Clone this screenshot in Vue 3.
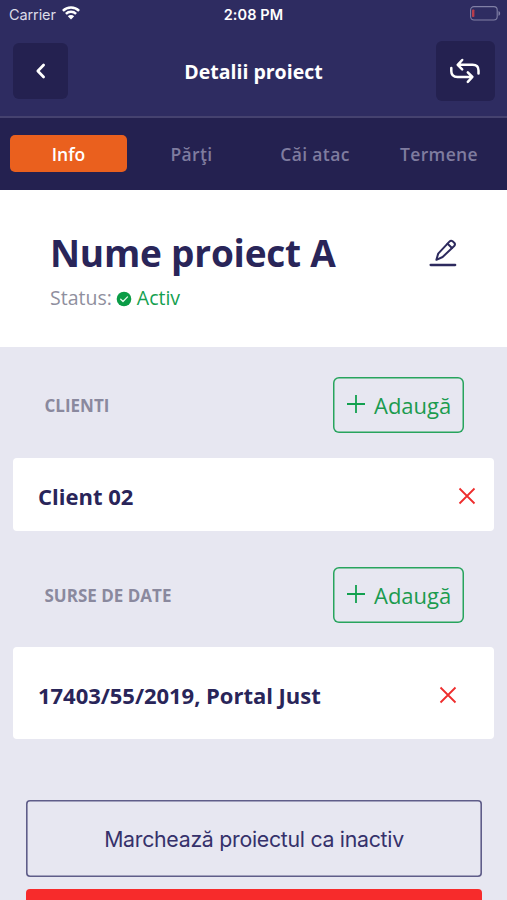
<script setup>
import { ref } from 'vue'

const tabs = ['Info', 'Părţi', 'Căi atac', 'Termene']
const activeTab = ref('Info')
const sections = [
  { key: 'clients', title: 'CLIENTI', items: ['Client 02'] },
  { key: 'sources', title: 'SURSE DE DATE', items: ['17403/55/2019, Portal Just'] },
]
</script>

<template>
  <div class="screen">
    <div class="status-bar">
      <div class="carrier">
        <span class="carrier-name">Carrier</span>
        <svg class="wifi" viewBox="0 0 18 14" width="18" height="14">
          <path d="M0.9 4.8a11.6 11.6 0 0 1 16.2 0M3.9 7.9a7.3 7.3 0 0 1 10.2 0" fill="none" stroke="#fff" stroke-width="2.5" />
          <path d="M9 13.5 5.8 10.3a4.6 4.6 0 0 1 6.4 0z" fill="#fff" />
        </svg>
      </div>
      <span class="time">2:08 PM</span>
      <svg class="battery" viewBox="0 0 31 15" width="31" height="15">
        <rect x="0.6" y="0.6" width="26.6" height="13.4" rx="3.4" fill="none" stroke="#8180a6" stroke-width="1.1" />
        <rect x="2" y="3.4" width="2.4" height="7.6" rx="0.8" fill="#b93d4b" />
        <path d="M28.5 5v4.8c2.2-.8 2.2-4 0-4.8z" fill="#8180a6" />
      </svg>
    </div>

    <header class="header">
      <button class="back" aria-label="Înapoi">
        <svg viewBox="0 0 12 16" width="12" height="16">
          <path d="M8.6 2 2.8 8 8.6 14" fill="none" stroke="#fff" stroke-width="2.7" stroke-linecap="round" stroke-linejoin="round" />
        </svg>
      </button>
      <h1 class="title"><span>Detalii proiect</span></h1>
      <button class="sync" aria-label="Sincronizare">
        <svg viewBox="0 0 32 26" width="32" height="26">
          <g fill="none" stroke="#fff" stroke-width="2.5" stroke-linecap="round" stroke-linejoin="round">
            <path d="M13.2 2 8.7 6.8 13.2 11.4M9 6.8H23.5Q29.5 6.8 29.5 12.5V15.5" />
            <path d="M18.8 14.4 23.4 19 18.8 23.8M23 19H8.5Q2.3 19 2.3 13V10" />
          </g>
        </svg>
      </button>
    </header>

    <nav class="tabs">
      <button
        v-for="tab in tabs"
        :key="tab"
        class="tab"
        :class="{ active: tab === activeTab }"
        @click="activeTab = tab"
      >{{ tab }}</button>
    </nav>

    <section class="project">
      <div>
        <h2 class="name"><span>Nume proiect A</span></h2>
        <p class="status">
          <span class="status-label">Status:</span>
          <svg viewBox="0 0 16 16" width="16" height="16">
            <circle cx="8" cy="8" r="7.3" fill="#0a9c46" />
            <path d="M4.7 8.2 7 10.5 11.5 5.9" fill="none" stroke="#e8faee" stroke-width="1.3" stroke-linecap="round" stroke-linejoin="round" />
          </svg>
          <span class="status-value">Activ</span>
        </p>
      </div>
      <svg class="edit" viewBox="0 0 28 30" width="28" height="30">
        <g fill="none" stroke="#2d2a5e" stroke-width="2" stroke-linejoin="round" stroke-linecap="round">
          <path d="M7.4 21.8 9.2 15.6 20.4 3.6Q22 2 23.6 3.3L25.2 4.7Q26.7 6.2 25.2 8L13.6 19Z" />
          <path d="M18.6 5.8 23 10" />
        </g>
        <path d="M1.6 27H26.2" stroke="#2d2a5e" stroke-width="2.3" stroke-linecap="round" />
      </svg>
    </section>

    <section v-for="section in sections" :key="section.key" class="group" :class="section.key">
      <div class="group-head">
        <h3>{{ section.title }}</h3>
        <button class="add">
          <svg viewBox="0 0 20 20" width="20" height="20">
            <path d="M10 1V19M1 10H19" stroke="#13a04f" stroke-width="1.8" />
          </svg>
          <span>Adaugă</span>
        </button>
      </div>
      <div v-for="item in section.items" :key="item" class="card">
        <span class="card-label">{{ item }}</span>
        <svg viewBox="0 0 18 18" width="18" height="18">
          <path d="M1.5 1.5 16.5 16.5M16.5 1.5 1.5 16.5" stroke="#ee2d2d" stroke-width="1.8" />
        </svg>
      </div>
    </section>

    <div class="actions">
      <button class="inactive"><span>Marchează proiectul ca inactiv</span></button>
      <button class="danger" aria-label="Șterge"></button>
    </div>
  </div>
</template>

<style>
body {
  margin: 0;
  overflow: hidden;
}
</style>

<style scoped>
.screen {
  box-sizing: border-box;
  width: 507px;
  height: 900px;
  overflow: hidden;
  display: flex;
  flex-direction: column;
  background: #e7e7f1;
  color: #292559;
  font-family: "Open Sans", "Noto Sans", sans-serif;
}
.screen * {
  box-sizing: border-box;
}
button {
  padding: 0;
  border: 0;
  background: none;
  font-family: inherit;
  color: inherit;
}
h1, h2, h3, p {
  margin: 0;
}
svg {
  display: block;
  flex: none;
}
.status-bar {
  flex: none;
  height: 28px;
  padding: 0 6px 0 9px;
  display: grid;
  grid-template-columns: 1fr auto 1fr;
  align-items: center;
  background: #2e2c61;
  color: #fff;
  font-family: Inter, sans-serif;
  font-size: 14.5px;
}
.carrier {
  display: flex;
  align-items: center;
  gap: 6px;
  color: #dcdbe8;
}
.carrier-name {
  letter-spacing: -0.1px;
}
.wifi {
  margin-top: -2px;
}
.time {
  padding-right: 3px;
  font-weight: 600;
  letter-spacing: 0.1px;
}
.battery {
  justify-self: end;
  margin-top: -2px;
}
.header {
  flex: none;
  height: 90px;
  padding: 0 12px 2px 13px;
  border-bottom: 2px solid #45426f;
  display: flex;
  align-items: center;
  justify-content: space-between;
  background: #2e2c61;
  color: #fff;
}
.back, .sync {
  display: flex;
  align-items: center;
  justify-content: center;
  background: #242150;
  border-radius: 6px;
}
.back {
  width: 55px;
  height: 56px;
}
.sync {
  width: 59px;
  height: 60px;
}
.title {
  padding: 2px 0 0 3px;
  font-size: 19.5px;
  font-weight: 700;
  line-height: 28px;
}
.tabs {
  flex: none;
  height: 72px;
  padding: 17px 6px 0 10px;
  display: grid;
  grid-template-columns: 117px 129px 118px 130px;
  background: #242150;
}
.tab {
  height: 37px;
  border-radius: 5px;
  color: #7f7c9f;
  font-size: 17.5px;
  font-weight: 600;
  letter-spacing: 0.35px;
}
.tab.active {
  background: #ea601e;
  color: #fff;
  letter-spacing: 0;
}
.project {
  flex: none;
  height: 157px;
  padding: 35px 50px 0 50px;
  display: flex;
  justify-content: space-between;
  background: #fff;
}
.name {
  font-size: 37px;
  font-weight: 700;
  line-height: 56px;
  letter-spacing: -0.22px;
}
.status {
  display: flex;
  align-items: center;
  padding-top: 1px;
  font-size: 19.5px;
  line-height: 32px;
}
.status-label {
  color: #8f8f9e;
}
.status svg {
  margin: 1px 5px 0 4px;
}
.status-value {
  color: #13a04f;
}
.edit {
  margin-top: 13px;
}
.group {
  flex: none;
  padding: 0 13px;
}
.clients {
  padding-top: 30px;
}
.sources {
  padding-top: 36px;
}
.group-head {
  display: flex;
  align-items: center;
  justify-content: space-between;
  padding: 0 30.5px 0 31.5px;
}
.group-head h3 {
  color: #8a899e;
  font-size: 17px;
  font-weight: 700;
}
.add {
  width: 131px;
  height: 56px;
  display: flex;
  align-items: center;
  padding-left: 13px;
  box-shadow: inset 0 0 0 1.5px #27a45d;
  border-radius: 6px;
  gap: 8.5px;
  color: #1b9b4f;
  font-size: 22px;
}
.add svg {
  margin-top: -3px;
}
.card {
  height: 73px;
  margin-top: 25px;
  padding: 0 18.5px 0 25px;
  display: flex;
  align-items: center;
  justify-content: space-between;
  background: #fff;
  border-radius: 4px;
  font-size: 22px;
  font-weight: 700;
}
.card-label {
  padding-top: 3px;
}
.card svg {
  margin-top: 3px;
}
.sources .card {
  height: 92px;
  margin-top: 24px;
  padding-right: 37px;
}
.sources .card-label {
  letter-spacing: -0.03px;
}
.actions {
  flex: none;
  display: flex;
  flex-direction: column;
  gap: 12px;
  padding: 61px 25px 0 26px;
}
.inactive {
  height: 77px;
  box-shadow: inset 0 0 0 1.6px #5f5d89;
  border-radius: 4px;
  color: #35316b;
  font-family: Inter, sans-serif;
  font-size: 21.3px;
  letter-spacing: -0.28px;
}
.danger {
  height: 77px;
  background: #f72b2b;
  border-radius: 4px;
}
</style>
